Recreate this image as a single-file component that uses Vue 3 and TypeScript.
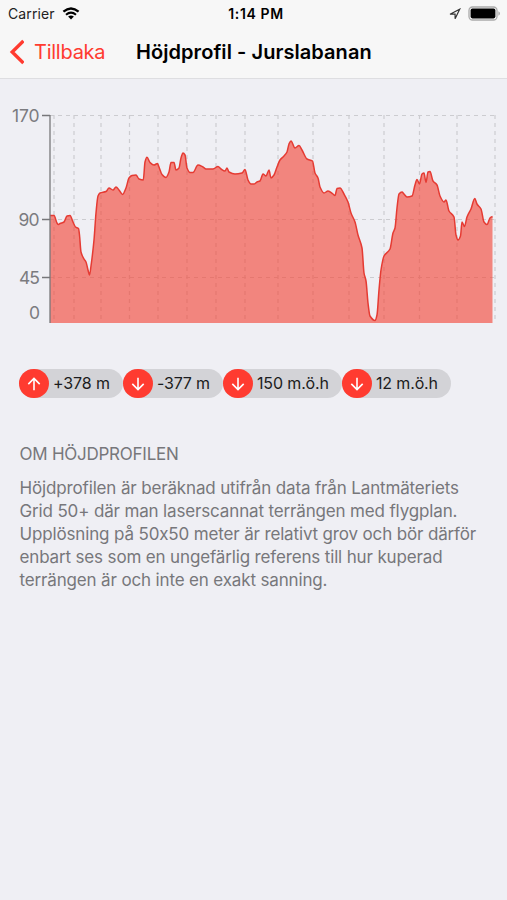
<script setup lang="ts">
interface Pill {
  dir: 'up' | 'down'
  label: string
  width: number
  textWidth: number
}

const pills: Pill[] = [
  { dir: 'up', label: '+378 m', width: 104, textWidth: 57 },
  { dir: 'down', label: '-377 m', width: 100, textWidth: 53 },
  { dir: 'down', label: '150 m.ö.h', width: 119, textWidth: 72 },
  { dir: 'down', label: '12 m.ö.h', width: 109, textWidth: 62 },
]

const lines: string[] = [
  'Höjdprofilen är beräknad utifrån data från Lantmäteriets',
  'Grid 50+ där man laserscannat terrängen med flygplan.',
  'Upplösning på 50x50 meter är relativt grov och bör därför',
  'enbart ses som en ungefärlig referens till hur kuperad',
  'terrängen är och inte en exakt sanning.',
]

const gridX = [54, 74, 101, 129.5, 158, 187, 216, 245, 278, 313, 349, 384, 419.5, 457, 495]
const gridY = [115.5, 219.5, 277.5]

const points: [number, number][] = [
  [50, 215.5], [54, 215.5], [57, 223], [58.5, 224.5], [60, 223.5], [64, 222], [67, 216], [70, 215.5],
  [73, 222], [75.5, 227], [78.5, 228.5], [79.5, 235], [81, 252], [84, 259], [86, 262], [88, 270],
  [89.5, 275], [91, 266], [94, 240], [96, 213], [98, 196], [100, 193], [106, 191.5], [109, 188],
  [113, 190], [116, 187], [119, 190], [122.5, 194.5], [126, 188], [129, 178], [132, 175.5], [136, 175],
  [139, 179], [143.3, 180], [145, 162], [147, 157.2], [150, 162.5], [154, 165], [157.5, 163.5],
  [159, 167], [162, 174.5], [166, 177.5], [169, 172], [171, 162.5], [174, 162.5], [176, 170], [179, 168],
  [181, 158], [183, 153], [185, 155], [187, 168], [190, 172.5], [193, 172.5], [198, 165], [203, 167],
  [206, 169], [213, 169], [218, 166.5], [221, 169], [225, 171], [227, 168], [229, 172], [235, 174],
  [242, 173], [245, 169.5], [248, 180], [251, 184], [254, 184], [257, 182], [260, 181], [263, 174],
  [266, 176], [269, 170], [271, 178], [274, 175], [277, 167], [280, 160], [284, 156], [287, 152],
  [289, 144], [291, 141], [295, 148], [299, 145.5], [302, 150], [307, 159], [312.5, 161], [315, 173],
  [318, 178], [320, 187], [324, 193], [328, 191], [333, 194], [335, 195.5], [337, 188.5], [340, 188],
  [344, 194], [348, 202], [351, 213], [355, 222], [358, 235], [362, 248], [364, 273], [366, 281],
  [368, 303], [370, 316], [375, 320.5], [377, 315], [379, 290], [381, 270], [384, 256], [390, 249],
  [393, 233], [395, 228], [397, 208], [399, 194], [402, 192], [404, 194], [407, 197], [412, 196],
  [415, 185], [417, 179.5], [419.5, 184], [422, 174], [424, 173], [426, 182.5], [428, 172], [430, 171.5],
  [433, 181], [437, 185], [440, 196], [444, 202], [446, 200], [449, 211], [454, 217], [456, 235],
  [458, 240], [460.5, 236], [462, 222], [464.5, 226.5], [467, 217], [471, 209], [474.8, 198.5],
  [477, 204], [481, 209], [484, 222], [487, 224.5], [490, 218], [492.5, 216.5],
]

// Monotone cubic interpolation: never overshoots the sampled heights.
function monotonePath(p: [number, number][]): string {
  const slope = p.slice(1).map((q, i) => (q[1] - p[i][1]) / (q[0] - p[i][0]))
  const m = p.map((_, i) => {
    if (i === 0) return slope[0]
    if (i === p.length - 1) return slope[i - 1]
    const a = slope[i - 1]
    const b = slope[i]
    return a * b <= 0 ? 0 : (2 * a * b) / (a + b)
  })
  let d = `M${p[0][0]} ${p[0][1]}`
  for (let i = 1; i < p.length; i++) {
    const h = (p[i][0] - p[i - 1][0]) / 3
    d += `C${(p[i - 1][0] + h).toFixed(2)} ${(p[i - 1][1] + h * m[i - 1]).toFixed(2)} `
    d += `${(p[i][0] - h).toFixed(2)} ${(p[i][1] - h * m[i]).toFixed(2)} ${p[i][0]} ${p[i][1]}`
  }
  return d
}

const linePath = monotonePath(points)
const areaPath = `${linePath}V323H50Z`
</script>

<template>
  <div class="screen">
    <header class="top">
      <div class="status">
        <div class="carrier">
          <span>Carrier</span>
          <svg class="wifi" width="18" height="13" viewBox="0 0 18 13">
            <path d="M1.4 4.7Q9 -1.7 16.6 4.7" fill="none" stroke="#000" stroke-width="2.3" />
            <path d="M4 7.7Q9 3.6 14 7.7" fill="none" stroke="#000" stroke-width="2.1" />
            <path d="M6.1 9.6Q9 7.4 11.9 9.6L9 12.6Z" fill="#000" />
          </svg>
        </div>
        <span class="clock">1:14 PM</span>
        <div class="indicators">
          <svg width="12" height="12" viewBox="0 0 12 12">
            <path d="M1 6.2L10.7 1.2L6.1 10.8V6.2Z" fill="none" stroke="#333" stroke-width="1.2" />
          </svg>
          <svg width="33" height="16" viewBox="0 0 33 16">
            <rect x="1" y="1" width="28" height="13" rx="3.5" fill="#f7f7f7" stroke="#aaa" stroke-width="1.3" />
            <rect x="2.6" y="2.6" width="24.8" height="9.8" rx="1.8" fill="#000" />
            <path d="M30.4 5.3Q32 6 32 7.5T30.4 9.7Z" fill="#aaa" />
          </svg>
        </div>
      </div>
      <nav class="nav">
        <a class="back">
          <svg width="16" height="26" viewBox="0 0 16 26">
            <path d="M15.4 2L4.2 13L15.4 24" fill="none" stroke="#ff3b30" stroke-width="3.4" />
          </svg>
          <span>Tillbaka</span>
        </a>
        <h1 class="title">Höjdprofil - Jurslabanan</h1>
      </nav>
    </header>

    <svg class="chart" width="507" height="240" viewBox="0 100 507 240">
      <g stroke="#ccccd0" stroke-width="1.2" stroke-dasharray="4 4">
        <line v-for="x in gridX" :key="'x' + x" :x1="x" :x2="x" y1="115" y2="323" />
        <line v-for="y in gridY" :key="'y' + y" :y1="y" :y2="y" x1="50" x2="495" />
      </g>
      <path :d="areaPath" fill="#f44336" fill-opacity="0.62" />
      <path :d="linePath" fill="none" stroke="#e53b33" stroke-width="1.5" stroke-linejoin="round" />
      <path d="M42 115.5H50M42 219.5H50M42 277.5H50M50 115V323" fill="none" stroke="#77777a" stroke-width="1.3" />
      <g class="axis" text-anchor="end">
        <text x="39.5" y="122" textLength="27.5">170</text>
        <text x="39.5" y="225.5" textLength="21">90</text>
        <text x="40" y="284" textLength="21">45</text>
        <text x="40" y="318.5">0</text>
      </g>
    </svg>

    <div class="pills">
      <div v-for="p in pills" :key="p.label" class="pill" :style="{ width: p.width + 'px' }">
        <span class="badge">
          <svg width="30" height="30" viewBox="0 0 30 30" :class="{ flipped: p.dir === 'up' }">
            <path d="M15 8.8V20.3M9.3 14.9L15 20.6L20.7 14.9" fill="none" stroke="#fff" stroke-width="1.6" />
          </svg>
        </span>
        <svg class="label" :width="p.textWidth + 2" height="30">
          <text x="0" y="20.5" :textLength="p.textWidth">{{ p.label }}</text>
        </svg>
      </div>
    </div>

    <section class="about">
      <h2>OM HÖJDPROFILEN</h2>
      <p>
        <span v-for="l in lines" :key="l" class="line">{{ l }}</span>
      </p>
    </section>
  </div>
</template>

<style>
body {
  background: #efeff4;
}
</style>

<style scoped>
.screen {
  width: 507px;
  height: 900px;
  overflow: hidden;
  background: #efeff4;
  font-family: Inter, Roboto, sans-serif;
  font-feature-settings: 'calt' 0;
  color: #000;
}
.top {
  box-sizing: border-box;
  height: 79px;
  background: #f7f7f7;
  border-bottom: 1px solid #dedee1;
}
.status {
  display: grid;
  grid-template-columns: 1fr auto 1fr;
  align-items: center;
  height: 27px;
  padding: 0 6px 0 8px;
  font-size: 14px;
}
.carrier {
  display: flex;
  align-items: center;
  gap: 7px;
  color: #222;
  letter-spacing: 0.1px;
}
.clock {
  font-size: 14px;
  font-weight: 600;
  letter-spacing: 0.6px;
  padding-left: 3px;
}
.indicators {
  display: flex;
  justify-content: flex-end;
  align-items: center;
  gap: 7px;
}
.nav {
  display: flex;
  align-items: center;
  height: 50px;
  padding-left: 8px;
}
.back {
  display: flex;
  align-items: center;
  gap: 10px;
  width: 128px;
  color: #ff3b30;
  font-size: 20px;
  letter-spacing: -0.25px;
}
.title {
  margin: 0;
  font-size: 20px;
  font-weight: 600;
  letter-spacing: 0.06px;
  white-space: nowrap;
}
.chart {
  display: block;
  margin-top: 21px;
}
.axis {
  font-size: 17.5px;
  fill: #7b7b7f;
}
.pills {
  display: flex;
  padding: 28.5px 0 0 19px;
}
.pill {
  display: flex;
  align-items: center;
  height: 29.5px;
  gap: 4.5px;
  border-radius: 15px;
  background: #d3d3d7;
}
.badge {
  width: 29.5px;
  height: 29.5px;
  border-radius: 50%;
  background: #ff3b30;
}
.badge svg,
.label {
  display: block;
}
.label {
  font-size: 16px;
  fill: #1c1c20;
}
.flipped {
  transform: rotate(180deg);
}
.about {
  padding: 44.5px 0 0 19.5px;
  color: #77777b;
}
.about h2 {
  margin: 0;
  font-size: 17px;
  font-weight: 400;
  line-height: 23px;
  letter-spacing: -0.25px;
}
.about p {
  margin: 11px 0 0;
  font-size: 17px;
  line-height: 23.2px;
  letter-spacing: -0.15px;
}
.line {
  display: block;
  white-space: nowrap;
}
</style>
